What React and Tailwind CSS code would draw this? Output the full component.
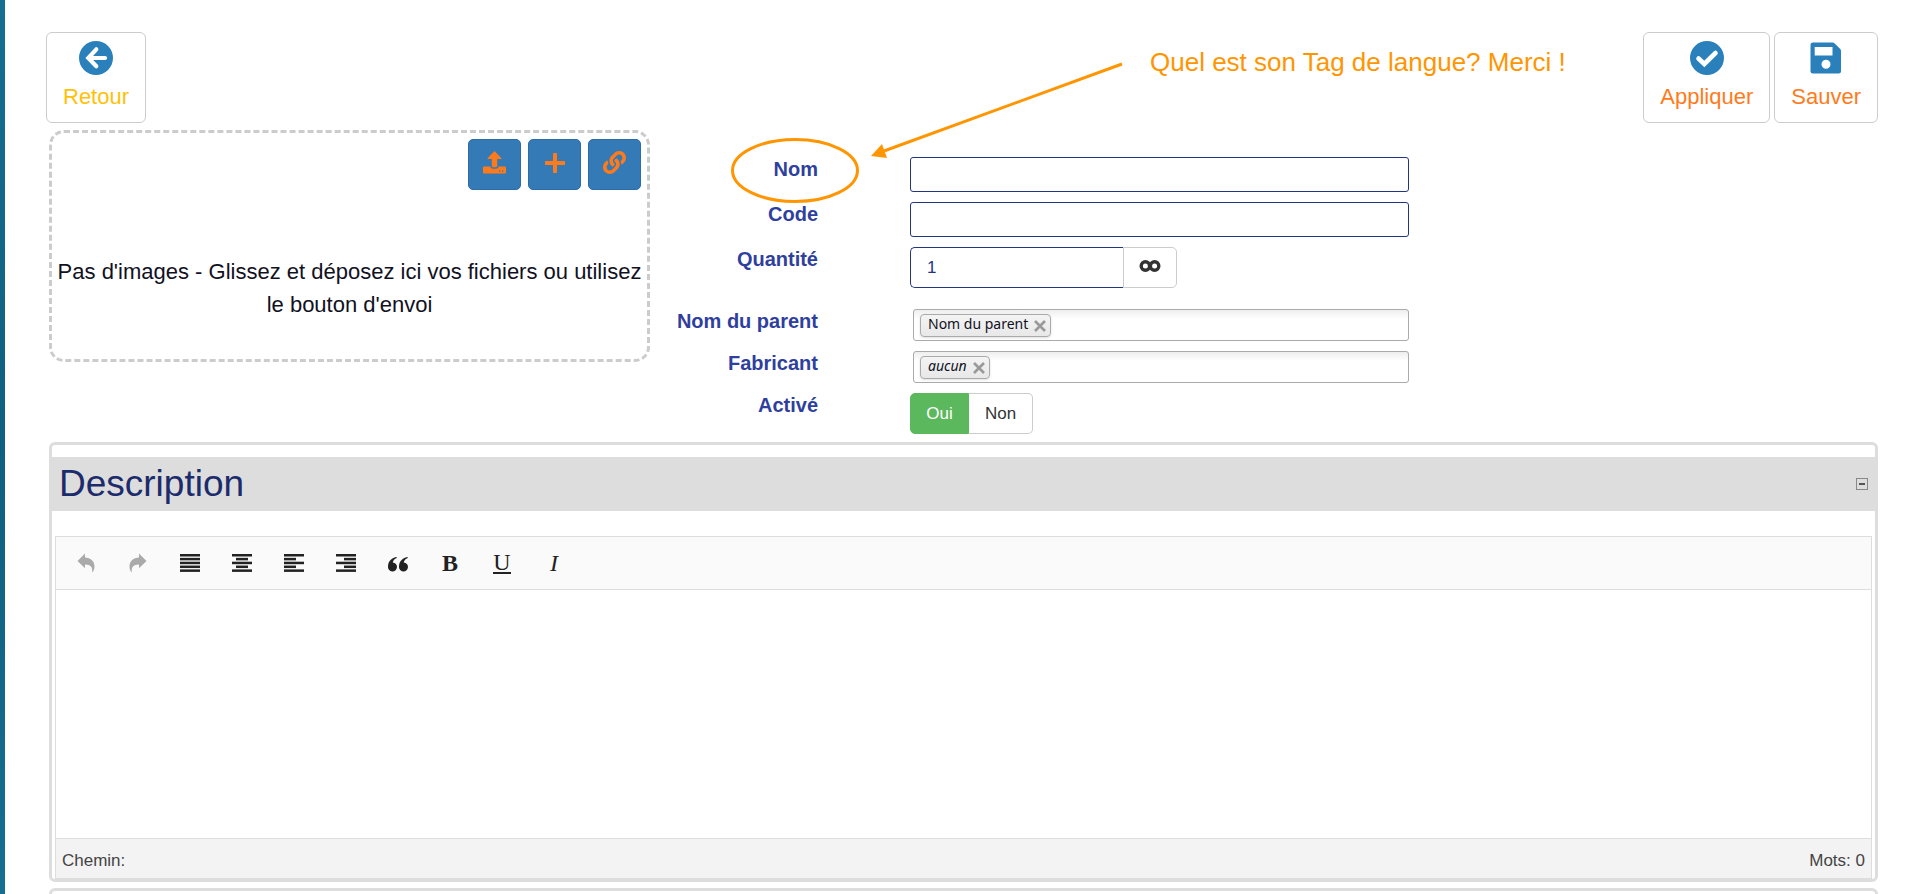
import React, { useState } from "react";
import { FaLink } from "react-icons/fa";

const svgProps = { viewBox: "0 0 20 20", className: "size-5", fill: "currentColor", "aria-hidden": true };

function Bars({ rows }) {
  return (
    <svg {...svgProps}>
      {rows.map(([x, w], i) => (
        <rect key={i} x={x} y={1 + i * 3.85} width={w} height="2.5" />
      ))}
    </svg>
  );
}

const Undo = () => (
  <svg {...svgProps}>
    <path d="M9 .5V4.600C14.500 4.800 18.500 8 18.500 13.500C18.500 16 17.800 18 16 19.500C17 14.500 15 11.500 9 11.400V15.200L1.500 8Z" />
  </svg>
);
const Redo = () => (
  <svg {...svgProps}>
    <path d="M11 .5V4.600C5.500 4.800 1.500 8 1.500 13.500C1.500 16 2.200 18 4 19.500C3 14.500 5 11.500 11 11.400V15.200L18.500 8Z" />
  </svg>
);
const Quote = () => (
  <svg {...svgProps}>
    <path d="M8.500 4C5.500 4.300 0 7 0 13.500A4.500 4.500 0 1 0 4.800 9.500C5.200 7.500 6.500 5.800 8.800 5Z" />
    <path d="M19.500 4C16.500 4.300 11 7 11 13.500A4.500 4.500 0 1 0 15.800 9.500C16.200 7.500 17.500 5.800 19.800 5Z" />
  </svg>
);
const Back = ({ className }) => (
  <svg viewBox="0 0 34 34" className={className} fill="none" stroke="white" strokeWidth="4.200" strokeLinecap="round" aria-hidden="true">
    <circle cx="17" cy="17" r="17" fill="currentColor" stroke="none" />
    <path d="M26 17H11M17.300 8.300L9.300 17L17.300 25.200" />
  </svg>
);
const Check = ({ className }) => (
  <svg viewBox="0 0 34 34" className={className} fill="none" stroke="white" strokeWidth="4.600" strokeLinecap="round" aria-hidden="true">
    <circle cx="17" cy="17" r="17" fill="currentColor" stroke="none" />
    <path d="M8.500 17.500L14.300 23L25.500 12" />
  </svg>
);
const Save = ({ className }) => (
  <svg viewBox="0 0 34 34" className={className} fill="currentColor" aria-hidden="true">
    <path fillRule="evenodd" d="M4 1.500H23.500Q24.800 1.500 25.700 2.400L31.300 8Q32 8.800 32 10V30Q32 32.500 29.500 32.500H4Q1.500 32.500 1.500 30V4Q1.500 1.500 4 1.500ZM5.700 6V14.500H23.500V6ZM17 18.700A4.500 4.500 0 1 0 17 27.700A4.500 4.500 0 1 0 17 18.700Z" />
  </svg>
);
const Upload = () => (
  <svg viewBox="0 0 23 23" className="size-[23px]" fill="currentColor" aria-hidden="true">
    <path d="M11.500 0L18.500 7.200Q18.700 8 18 8H14.200V15Q14.200 16.300 13 16.300H10Q8.800 16.300 8.800 15V8H5Q4.300 8 4.500 7.200Z" />
    <path fillRule="evenodd" d="M1 15.500H7.300Q7.600 17.800 10 17.800H13Q15.400 17.800 15.700 15.500H22Q23 15.500 23 16.500V21.500Q23 22.500 22 22.500H1Q0 22.500 0 21.500V16.500Q0 15.500 1 15.500ZM16 19.500V20.800H17.300V19.500ZM19 19.500V20.800H20.300V19.500Z" />
  </svg>
);
const Plus = () => (
  <svg viewBox="0 0 20 20" className="size-5" fill="currentColor" aria-hidden="true">
    <path d="M8.500 0H11.500Q12 0 12 .5V8H19.500Q20 8 20 8.500V11.500Q20 12 19.500 12H12V19.500Q12 20 11.500 20H8.500Q8 20 8 19.500V12H.5Q0 12 0 11.500V8.500Q0 8 .5 8H8V.5Q8 0 8.500 0Z" />
  </svg>
);

function ActionButton({ icon: Icon, label, color }) {
  return (
    <button type="button" className={`flex h-[91px] flex-col items-center rounded-md border border-[#ccc] bg-white px-4 pt-2 text-[22px] leading-8 ${color}`}>
      <Icon className="mb-1.5 size-[34px] text-[#2a80bb]" />
      {label}
    </button>
  );
}

function UploadButton({ label, children }) {
  return (
    <button type="button" aria-label={label} className="flex h-[51px] w-[53px] items-center justify-center rounded-[5px] border border-[#2e6da4] bg-[#337ab7] pb-1 text-[#ff7a1a]">
      {children}
    </button>
  );
}

function Row({ id, label, className = "", children }) {
  return (
    <div className={`flex items-start ${className}`}>
      <label htmlFor={id} className="w-[168px] shrink-0 text-right text-xl leading-6 font-bold text-[#2f3f9e]">{label}</label>
      <div className="ml-[92px] w-[499px]">{children}</div>
    </div>
  );
}

function TagBox({ id, text, italic }) {
  return (
    <div className="ml-[3px] flex h-8 items-center rounded-[3px] border border-[#aaa] bg-gradient-to-b from-[#eee] via-white via-30% to-white pl-1.5">
      <span className="flex h-[23px] items-center gap-1.5 rounded border border-[#aaa] bg-gradient-to-b from-[#f4f4f4] to-[#e8e8e8] pr-1 pl-[7px] font-['Noto_Sans',sans-serif] text-sm leading-5 text-[#112] shadow-sm">
        <span className={italic ? "pb-0.5 italic" : "pb-0.5"}>{text}</span>
        <button type="button" aria-label={`Retirer ${text}`} className="pt-0.5">
          <svg viewBox="0 0 12 12" className="size-3" stroke="#999" strokeWidth="2.6" aria-hidden="true"><path d="M1 1L11 11M11 1L1 11" /></svg>
        </button>
      </span>
      <input id={id} className="h-6 min-w-0 flex-1 bg-transparent outline-none" />
    </div>
  );
}

const tools = [
  ["Annuler", <Undo />, true],
  ["Rétablir", <Redo />, true],
  ["Justifier", <Bars rows={[[0, 20], [0, 20], [0, 20], [0, 20], [0, 20]]} />],
  ["Centrer", <Bars rows={[[0, 20], [4, 12], [0, 20], [4, 12], [0, 20]]} />],
  ["Aligner à gauche", <Bars rows={[[0, 20], [0, 12], [0, 20], [0, 12], [0, 20]]} />],
  ["Aligner à droite", <Bars rows={[[0, 20], [8, 12], [0, 20], [8, 12], [0, 20]]} />],
  ["Citation", <Quote />],
  ["Gras", <b>B</b>],
  ["Souligné", <span className="border-b-2 border-[#222] leading-5">U</span>],
  ["Italique", <i>I</i>],
];

export default function App() {
  const [active, setActive] = useState(true);
  const [open, setOpen] = useState(true);
  return (
    <div className="flex h-screen overflow-hidden bg-white font-['Liberation_Sans',Arial,sans-serif]">
      <div className="w-[5px] shrink-0 bg-gradient-to-b from-[#146f93] via-[#0f5f80] to-[#146f93]" />
      <main className="min-w-0 flex-1 pt-8 pr-[42px] pl-11">
        <div className="relative -ml-[3px] flex justify-between">
          <ActionButton icon={Back} label="Retour" color="text-[#ffc107]" />
          <p className="absolute top-3.5 left-[1104px] text-[26px] leading-8 whitespace-nowrap text-[#ff9500]">Quel est son Tag de langue? Merci !</p>
          <svg className="pointer-events-none absolute top-6 left-[680px] h-[150px] w-[410px]" viewBox="0 0 410 150" fill="none" stroke="#ff9500" strokeWidth="3" aria-hidden="true">
            <ellipse cx="69" cy="114.500" rx="62.500" ry="31" />
            <path d="M396 8L158 95" />
            <path d="M145 100L161 102L156 88Z" fill="#ff9500" stroke="none" />
          </svg>
          <div className="flex gap-1">
            <ActionButton icon={Check} label="Appliquer" color="text-[#ff7a1a]" />
            <ActionButton icon={Save} label="Sauver" color="text-[#ff7a1a]" />
          </div>
        </div>

        <div className="flex items-start">
          <section className="mt-[7px] h-[232px] w-[601px] shrink-0 rounded-[15px] border-3 border-dashed border-[#ccc]">
            <div className="flex justify-end gap-[7px] pt-1.5 pr-1.5">
              <UploadButton label="Envoyer"><Upload /></UploadButton>
              <UploadButton label="Ajouter"><Plus /></UploadButton>
              <UploadButton label="Lier"><FaLink className="size-[23px]" /></UploadButton>
            </div>
            <p className="-mx-1 mt-[65px] text-center text-[22px] leading-[33px] text-[#112]">Pas d'images - Glissez et déposez ici vos fichiers ou utilisez le bouton d'envoi</p>
          </section>

          <form className="pt-[34px]" onSubmit={(e) => e.preventDefault()}>
            <Row id="nom" label="Nom" className="h-[45px]">
              <input id="nom" className="block h-[35px] w-full rounded-[3px] border border-[#24357f] px-4 text-[17px]" />
            </Row>
            <Row id="code" label="Code" className="h-[45px]">
              <input id="code" className="block h-[35px] w-full rounded-[3px] border border-[#24357f] px-4 text-[17px]" />
            </Row>
            <Row id="qte" label="Quantité" className="h-[62px]">
              <div className="flex">
                <input id="qte" defaultValue="1" className="h-[41px] w-[213px] rounded-l-[5px] border border-r-0 border-[#24357f] px-4 text-[17px] text-[#24357f]" />
                <button type="button" aria-label="Illimité" className="flex h-[41px] w-[54px] items-center justify-center rounded-r-[5px] border border-[#ccc] pb-1 text-[#333]">
                  <svg viewBox="0 0 22 12" className="h-3 w-[22px]" fill="none" stroke="currentColor" strokeWidth="3.400" aria-hidden="true">
                    <circle cx="6.400" cy="6" r="4.200" /><circle cx="15.600" cy="6" r="4.200" />
                  </svg>
                </button>
              </div>
            </Row>
            <Row id="parent" label="Nom du parent" className="h-[42px]"><TagBox id="parent" text="Nom du parent" /></Row>
            <Row id="fab" label="Fabricant" className="h-[42px]"><TagBox id="fab" text="aucun" italic /></Row>
            <Row id="oui" label="Activé">
              <div className="flex h-[41px] text-[17px]">
                <button id="oui" type="button" aria-pressed={active} onClick={() => setActive(true)} className={`w-[59px] rounded-l-[5px] border ${active ? "border-[#5cb85c] bg-[#5cb85c] text-white" : "border-[#ccc] text-[#333]"}`}>Oui</button>
                <button type="button" aria-pressed={!active} onClick={() => setActive(false)} className={`w-16 rounded-r-[5px] border border-l-0 ${active ? "border-[#ccc] text-[#333]" : "border-[#d9534f] bg-[#d9534f] text-white"}`}>Non</button>
              </div>
            </Row>
          </form>
        </div>

        <section className="mt-2 rounded-md border-3 border-[#ddd] pt-3">
          <div className="flex h-[54px] items-center justify-between bg-[#ddd] px-[7px]">
            <h2 className="text-[37px] leading-[54px] text-[#1c2b6b]">Description</h2>
            <button type="button" aria-label="Réduire" onClick={() => setOpen(!open)} className="flex size-3 items-center justify-center border border-[#888]">
              <span className="h-0.5 w-1.5 bg-[#555]" />
            </button>
          </div>
          {open && (
            <div className="mx-[3px] mt-[25px] border border-[#ddd]">
              <div className="flex h-[53px] items-center border-b border-[#ddd] bg-[#fafafa] pl-1">
                {tools.map(([label, icon, off]) => (
                  <button key={label} type="button" aria-label={label} disabled={off} className={`flex h-10 w-[52px] items-center justify-center font-['Liberation_Serif',serif] text-2xl leading-6 ${off ? "text-[#aaa]" : "text-[#222]"}`}>
                    {icon}
                  </button>
                ))}
              </div>
              <textarea aria-label="Description" className="block h-[248px] w-full resize-none p-2 outline-none" />
              <div className="flex h-10 items-center justify-between border-t border-[#ddd] bg-[#f3f3f3] px-1.5 pt-1 text-[17px] text-[#444]">
                <span>Chemin:</span>
                <span>Mots: 0</span>
              </div>
            </div>
          )}
        </section>
        <section className="mt-1.5 h-24 rounded-md border-3 border-[#ddd]" />
      </main>
    </div>
  );
}
